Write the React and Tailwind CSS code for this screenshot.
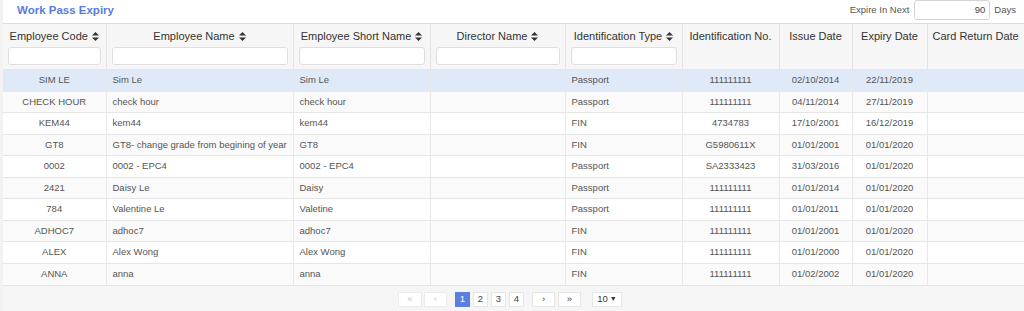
import React from "react";

const cols = [
  { w: 103, title: "Employee Code", sort: true, filter: true, align: "center" },
  { w: 187, title: "Employee Name", sort: true, filter: true, align: "left" },
  { w: 137, title: "Employee Short Name", sort: true, filter: true, align: "left" },
  { w: 135, title: "Director Name", sort: true, filter: true, align: "left" },
  { w: 117, title: "Identification Type", sort: true, filter: true, align: "left" },
  { w: 97, title: "Identification No.", sort: false, filter: false, align: "center" },
  { w: 73, title: "Issue Date", sort: false, filter: false, align: "center" },
  { w: 75, title: "Expiry Date", sort: false, filter: false, align: "center" },
  { w: 97, title: "Card Return Date", sort: false, filter: false, align: "center" },
];

const rows = [
  ["SIM LE", "Sim Le", "Sim Le", "", "Passport", "111111111", "02/10/2014", "22/11/2019", ""],
  ["CHECK HOUR", "check hour", "check hour", "", "Passport", "111111111", "04/11/2014", "27/11/2019", ""],
  ["KEM44", "kem44", "kem44", "", "FIN", "4734783", "17/10/2001", "16/12/2019", ""],
  ["GT8", "GT8- change grade from begining of year", "GT8", "", "FIN", "G5980611X", "01/01/2001", "01/01/2020", ""],
  ["0002", "0002 - EPC4", "0002 - EPC4", "", "Passport", "SA2333423", "31/03/2016", "01/01/2020", ""],
  ["2421", "Daisy Le", "Daisy", "", "Passport", "111111111", "01/01/2014", "01/01/2020", ""],
  ["784", "Valentine Le", "Valetine", "", "Passport", "111111111", "01/01/2011", "01/01/2020", ""],
  ["ADHOC7", "adhoc7", "adhoc7", "", "FIN", "111111111", "01/01/2001", "01/01/2020", ""],
  ["ALEX", "Alex Wong", "Alex Wong", "", "FIN", "111111111", "01/01/2000", "01/01/2020", ""],
  ["ANNA", "anna", "anna", "", "FIN", "111111111", "01/02/2002", "01/01/2020", ""],
];

function SortIcon() {
  return (
    <svg width="7" height="9" viewBox="0 0 7 9" className="inline-block ml-[4px] -mt-[1px] align-middle">
      <path d="M3.5 0 L7 3.6 L0 3.6 Z" fill="#333" />
      <path d="M3.5 9 L7 5.4 L0 5.4 Z" fill="#333" />
    </svg>
  );
}

function PageBtn({ children, w, active, disabled }) {
  return (
    <div
      className={
        "h-[15px] flex items-center justify-center text-[9.5px] border " +
        (active
          ? "bg-[#5b7fdf] border-[#5b7fdf] text-white"
          : disabled
          ? "bg-white border-[#ececec] text-[#c8c8c8]"
          : "bg-white border-[#e6e6e6] text-[#444]")
      }
      style={{ width: w }}
    >
      {children}
    </div>
  );
}

export default function App() {
  return (
    <div
      className="w-[1024px] h-[311px] overflow-hidden bg-[#f2f2f2] pl-[3px]"
      style={{ fontFamily: '"Liberation Sans", Arial, sans-serif' }}
    >
      <div className="bg-white h-full">
        <div className="h-[23px] flex items-start justify-between">
          <div className="pl-[14px] pt-[2px] text-[11.5px] font-bold text-[#5a7ddd]">Work Pass Expiry</div>
          <div className="flex items-center text-[9.5px] text-[#555] pr-[8px]">
            <span className="mr-[5px]">Expire In Next</span>
            <div className="w-[76px] h-[20px] border border-[#d4d4d4] rounded-[3px] flex items-center justify-end pr-[4px] text-[#444]">
              90
            </div>
            <span className="ml-[4px]">Days</span>
          </div>
        </div>
        <table className="table-fixed border-collapse w-[1021px]">
          <colgroup>
            {cols.map((c, i) => (
              <col key={i} style={{ width: c.w }} />
            ))}
          </colgroup>
          <thead>
            <tr className="h-[46px] bg-[#f6f6f6] border-t border-[#dcdcdc]">
              {cols.map((c, i) => (
                <th
                  key={i}
                  className="align-top font-normal text-[11px] text-[#333] border-r border-[#e4e4e4] px-[5px] pt-[6px] text-center whitespace-nowrap overflow-hidden"
                >
                  <div className="h-[13px] leading-[13px]">
                    {c.title}
                    {c.sort && <SortIcon />}
                  </div>
                  {c.filter && (
                    <div className="mt-[4px] h-[18px] bg-white border border-[#dedede] rounded-[3px]" />
                  )}
                </th>
              ))}
            </tr>
          </thead>
          <tbody>
            {rows.map((r, ri) => (
              <tr
                key={ri}
                className={
                  "h-[21.5px] border-t border-[#e6e6e6] " +
                  (ri === 0 ? "bg-[#dfe9f8]" : ri % 2 === 1 ? "bg-[#fafafa]" : "bg-white")
                }
              >
                {r.map((v, ci) => (
                  <td
                    key={ci}
                    className={
                      "text-[9.5px] text-[#555] border-r border-[#e8e8e8] px-[6px] whitespace-nowrap overflow-hidden " +
                      (cols[ci].align === "center" ? "text-center" : "text-left")
                    }
                  >
                    {v}
                  </td>
                ))}
              </tr>
            ))}
          </tbody>
        </table>
        <div className="h-[27px] bg-[#f5f5f5] border-t border-[#e4e4e4] flex items-start pt-[6px] pl-[395px]">
          <div className="flex items-center">
            <PageBtn w={24} disabled>«</PageBtn>
            <div className="w-[2px]" />
            <PageBtn w={23} disabled>‹</PageBtn>
            <div className="w-[8px]" />
            <PageBtn w={15} active>1</PageBtn>
            <div className="w-[3px]" />
            <PageBtn w={15}>2</PageBtn>
            <div className="w-[3px]" />
            <PageBtn w={15}>3</PageBtn>
            <div className="w-[3px]" />
            <PageBtn w={15}>4</PageBtn>
            <div className="w-[8px]" />
            <PageBtn w={23}>›</PageBtn>
            <div className="w-[3px]" />
            <PageBtn w={23}>»</PageBtn>
            <div className="w-[11px]" />
            <div className="h-[15px] w-[30px] bg-white border border-[#e6e6e6] flex items-center justify-center text-[9.5px] text-[#333]">
              10 <span className="ml-[2px] text-[7px]">▼</span>
            </div>
          </div>
        </div>
      </div>
    </div>
  );
}
